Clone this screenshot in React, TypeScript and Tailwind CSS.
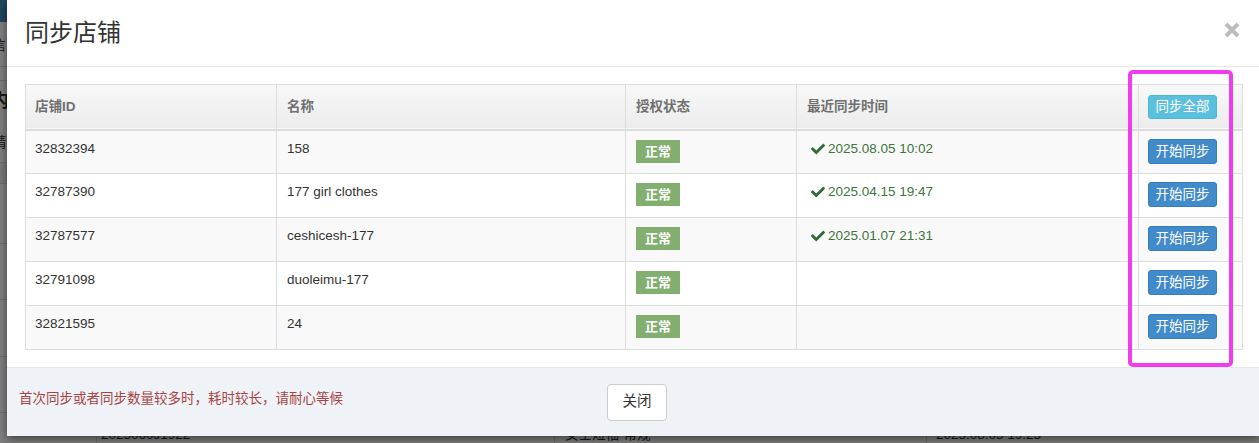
import { FaCheck } from "react-icons/fa";

type Shop = {
  id: string;
  name: string;
  syncedAt?: string;
};

const shops: Shop[] = [
  { id: "32832394", name: "158", syncedAt: "2025.08.05 10:02" },
  { id: "32787390", name: "177 girl clothes", syncedAt: "2025.04.15 19:47" },
  { id: "32787577", name: "ceshicesh-177", syncedAt: "2025.01.07 21:31" },
  { id: "32791098", name: "duoleimu-177" },
  { id: "32821595", name: "24" },
];

function PageBehind() {
  return (
    <div className="flex h-full flex-col bg-white text-[13.5px] text-[#333]">
      <div className="h-[22px] bg-[#438eb9]" />
      <div className="h-[46px] border-b border-[#ddd] pt-[14px] leading-[20px] -ml-[8px]">信</div>
      <div className="h-[14px] border-b border-[#ddd]" />
      <div className="h-[48px] pt-[8px] text-[18px] font-bold leading-[24px] -ml-[9px]">内</div>
      <div className="h-[34px] border-b border-[#ddd] pt-[4px] leading-[20px] -ml-[7px]">请</div>
      <div className="h-[22px] border-b border-[#ddd] bg-[#f2f2f2]" />
      <div className="h-[60px] border-b border-[#ddd]" />
      <div className="h-[57px] border-b border-[#ddd]" />
      <div className="h-[57px] border-b border-[#ddd]" />
      <div className="h-[57px] border-b border-[#ddd]" />
      <div className="flex h-[30px] pt-[12px] leading-[20px]">
        <div className="w-[96px]" />
        <div className="w-[458px] border-l border-[#ddd] pl-[4px]">2025060J1922</div>
        <div className="w-[372px] border-l border-[#ddd] pl-[10px]">女士短袖-常规</div>
        <div className="flex-1 border-l border-[#ddd] pl-[9px]">2025.08.05 19:25</div>
      </div>
    </div>
  );
}

function ShopTable() {
  return (
    <table className="w-[1217px] table-fixed border-collapse border border-[#ddd] text-[13.5px] text-[#333]">
      <colgroup>
        <col className="w-[251px]" />
        <col className="w-[349px]" />
        <col className="w-[171px]" />
        <col className="w-[342px]" />
        <col className="w-[104px]" />
      </colgroup>
      <thead>
        <tr className="h-[45px] border-b-2 border-[#ddd] bg-gradient-to-b from-[#f8f8f8] to-[#ececec] text-left font-bold text-[#707070]">
          <th className="border-r border-[#ddd] px-[9px] align-middle">店铺ID</th>
          <th className="border-r border-[#ddd] px-[10px] align-middle">名称</th>
          <th className="border-r border-[#ddd] px-[10px] align-middle">授权状态</th>
          <th className="border-r border-[#ddd] px-[10px] align-middle">最近同步时间</th>
          <th className="px-[9px] align-middle">
            <button className="h-[24px] w-[69px] rounded-[3px] border border-[#46b8da] bg-[#5bc0de] text-[13.5px] font-normal leading-[22px] text-white">
              同步全部
            </button>
          </th>
        </tr>
      </thead>
      <tbody>
        {shops.map((shop, i) => (
          <tr key={shop.id} className={`h-[44px] border-t border-[#ddd] ${i % 2 === 0 ? "bg-[#f9f9f9]" : "bg-white"}`}>
            <td className="border-r border-[#ddd] px-[9px] pt-[8px] align-top leading-[20px]">{shop.id}</td>
            <td className="border-r border-[#ddd] px-[10px] pt-[8px] align-top leading-[20px]">{shop.name}</td>
            <td className="border-r border-[#ddd] px-[10px] pt-[9px] align-top">
              <span className="inline-block h-[23px] w-[44px] bg-[#82af6f] text-center text-[13px] font-bold leading-[23px] text-white">
                正常
              </span>
            </td>
            <td className="border-r border-[#ddd] pl-[14px] pt-[8px] align-top leading-[20px] text-[#3c763d]">
              {shop.syncedAt ? (
                <span className="inline-flex items-center gap-[3px]">
                  <FaCheck className="h-[14px] w-[14px] text-[#2f6b35]" />
                  {shop.syncedAt}
                </span>
              ) : null}
            </td>
            <td className="px-[9px] pt-[8px] align-top">
              <button className="h-[25px] w-[69px] rounded-[3px] border border-[#357ebd] bg-[#428bca] text-[13.5px] leading-[23px] text-white">
                开始同步
              </button>
            </td>
          </tr>
        ))}
      </tbody>
    </table>
  );
}

export default function App() {
  return (
    <div className="relative h-[443px] w-[1259px] overflow-hidden font-['Liberation_Sans','Noto_Sans_CJK_SC',sans-serif]">
      <PageBehind />
      <div className="absolute inset-0 bg-black/50" />

      <div className="absolute left-[7px] top-0 w-[1253px] bg-white shadow-[0_3px_9px_rgba(0,0,0,0.5)]">
        <div className="flex h-[67px] items-center justify-between border-b border-[#e5e5e5] pl-[18px] pr-[20px]">
          <h3 className="text-[24px] font-normal leading-[30px] text-[#333]">同步店铺</h3>
          <svg width="16" height="16" viewBox="0 0 16 16" className="-mt-[6px]">
            <path d="M2 2 L14 14 M14 2 L2 14" stroke="#bdbdbd" strokeWidth="4" strokeLinecap="butt" />
          </svg>
        </div>

        <div className="pb-[17px] pl-[18px] pt-[17px]">
          <ShopTable />
        </div>

        <div className="grid h-[69px] grid-cols-[588px_auto_1fr] items-center border-t border-[#e4e9ee] bg-[#eff3f8] pl-[12px]">
          <p className="-mt-[5px] text-[13.5px] text-[#a94442]">首次同步或者同步数量较多时，耗时较长，请耐心等候</p>
          <button className="h-[37px] w-[60px] rounded-[4px] border border-[#ccc] bg-white text-[14.5px] text-[#333]">
            关闭
          </button>
          <div />
        </div>
      </div>

      <div className="absolute left-[1128px] top-[70px] h-[297px] w-[105px] rounded-[5px] border-4 border-[#f03cf0]" />
    </div>
  );
}
